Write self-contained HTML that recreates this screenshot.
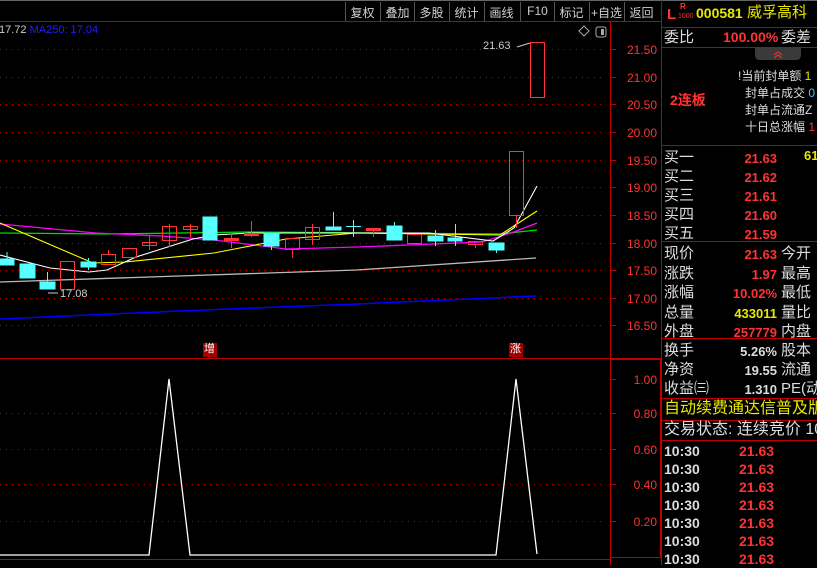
<!DOCTYPE html>
<html><head><meta charset="utf-8"><style>
*{margin:0;padding:0;box-sizing:border-box}
body{width:817px;height:565px;background:#000;overflow:hidden;position:relative;font-family:"Liberation Sans","Noto Sans CJK SC",sans-serif;}
.t{position:absolute;white-space:nowrap;line-height:1}
.btn{position:absolute;top:4px;font-size:12px;color:#d0d0d0;width:35px;text-align:center}
.ax{position:absolute;right:160px;font-size:12px;color:#ff3333;text-align:right;width:46px}
.r{color:#ff3333}.y{color:#e8e800}.w{color:#ddd}
</style></head><body>
<svg width="817" height="565" style="position:absolute;left:0;top:0">
<line x1="0" y1="0.5" x2="817" y2="0.5" stroke="#666"/>
<line x1="0" y1="21.5" x2="661" y2="21.5" stroke="#c00000"/>
<g stroke="#555"><line x1="345.5" y1="2" x2="345.5" y2="21"/><line x1="380.5" y1="2" x2="380.5" y2="21"/><line x1="414.5" y1="2" x2="414.5" y2="21"/><line x1="449.5" y1="2" x2="449.5" y2="21"/><line x1="484.5" y1="2" x2="484.5" y2="21"/><line x1="520.5" y1="2" x2="520.5" y2="21"/><line x1="554.5" y1="2" x2="554.5" y2="21"/><line x1="589.5" y1="2" x2="589.5" y2="21"/><line x1="624.5" y1="2" x2="624.5" y2="21"/></g>
<g stroke="#c00000" stroke-dasharray="1,5">
<line x1="0" y1="49.5" x2="605" y2="49.5"/><line x1="0" y1="77.5" x2="605" y2="77.5"/><line x1="0" y1="104.5" x2="605" y2="104.5"/><line x1="0" y1="132.5" x2="605" y2="132.5"/><line x1="0" y1="160.5" x2="605" y2="160.5"/><line x1="0" y1="187.5" x2="605" y2="187.5"/><line x1="0" y1="215.5" x2="605" y2="215.5"/><line x1="0" y1="243.5" x2="605" y2="243.5"/><line x1="0" y1="270.5" x2="605" y2="270.5"/><line x1="0" y1="298.5" x2="605" y2="298.5"/><line x1="0" y1="325.5" x2="605" y2="325.5"/>
<line x1="0" y1="413.5" x2="605" y2="413.5"/><line x1="0" y1="449.5" x2="605" y2="449.5"/><line x1="0" y1="484.5" x2="605" y2="484.5"/><line x1="0" y1="521.5" x2="605" y2="521.5"/>
</g>
<line x1="610.5" y1="22" x2="610.5" y2="565" stroke="#c00000"/>
<line x1="0" y1="358.5" x2="661" y2="358.5" stroke="#c00000"/>
<line x1="0" y1="559.5" x2="610" y2="559.5" stroke="#c00000"/>
<rect x="610.5" y="359.5" width="50" height="198" fill="none" stroke="#c00000"/>
<line x1="661.5" y1="0" x2="661.5" y2="565" stroke="#c00000"/>
<g stroke="#c00000"><line x1="611" y1="49.5" x2="616" y2="49.5"/><line x1="611" y1="77.5" x2="616" y2="77.5"/><line x1="611" y1="104.5" x2="616" y2="104.5"/><line x1="611" y1="132.5" x2="616" y2="132.5"/><line x1="611" y1="160.5" x2="616" y2="160.5"/><line x1="611" y1="187.5" x2="616" y2="187.5"/><line x1="611" y1="215.5" x2="616" y2="215.5"/><line x1="611" y1="243.5" x2="616" y2="243.5"/><line x1="611" y1="270.5" x2="616" y2="270.5"/><line x1="611" y1="298.5" x2="616" y2="298.5"/><line x1="611" y1="325.5" x2="616" y2="325.5"/><line x1="611" y1="379.5" x2="616" y2="379.5"/><line x1="611" y1="413.5" x2="616" y2="413.5"/><line x1="611" y1="449.5" x2="616" y2="449.5"/><line x1="611" y1="484.5" x2="616" y2="484.5"/><line x1="611" y1="521.5" x2="616" y2="521.5"/></g>
<g stroke="#c00000"><line x1="661" y1="27.5" x2="817" y2="27.5"/><line x1="661" y1="47.5" x2="817" y2="47.5"/><line x1="661" y1="145.5" x2="817" y2="145.5"/><line x1="661" y1="241.5" x2="817" y2="241.5"/><line x1="661" y1="338.5" x2="817" y2="338.5"/><line x1="661" y1="398.5" x2="817" y2="398.5"/><line x1="661" y1="420.5" x2="817" y2="420.5"/><line x1="661" y1="440.5" x2="817" y2="440.5"/></g>
<path d="M755 47h46v8q0 5-5 5h-36q-5 0-5-5z" fill="#3a3a3a"/>
<path d="M774 55l4-3 4 3M774 58l4-3 4 3" stroke="#ff3333" fill="none"/>
<polyline fill="none" stroke="#bbb" stroke-width="1.3" points="0,282 179,276 357,270 536,258"/>
<polyline fill="none" stroke="#0000ff" stroke-width="1.5" points="0,319 179,311 357,304 536,296"/>
<polyline fill="none" stroke="#00dd00" stroke-width="1.3" points="0,233 107,234 250,232 500,234 537,230"/>
<polyline fill="none" stroke="#ff00ff" stroke-width="1.3" points="0,224 96,233 161,236 214,240 286,249 357,247 482,242 511,233 537,223"/>
<polyline fill="none" stroke="#ffff00" stroke-width="1.1" points="0,223 93,263 125,262 214,253 286,239 357,233 500,235 537,211"/>
<polyline fill="none" stroke="#fff" stroke-width="1.1" points="0,255 50,268 89,272 107,270 136,257 193,239 214,235 250,233 357,233 429,233 493,241 514,228 537,186"/>
<g stroke="#ff3333" fill="none">
<rect x="60.5" y="261.5" width="14" height="28"/><rect x="101.5" y="254.5" width="14" height="10"/><line x1="108.5" y1="250" x2="108.5" y2="254"/>
<rect x="122.5" y="248.5" width="14" height="9"/><rect x="142.5" y="242.5" width="14" height="3"/><line x1="149.5" y1="235" x2="149.5" y2="250"/>
<rect x="162.5" y="226.5" width="14" height="14"/><line x1="169.5" y1="224" x2="169.5" y2="247"/>
<rect x="183.5" y="226.5" width="14" height="3"/><line x1="190.5" y1="224" x2="190.5" y2="237"/>
<line x1="231.5" y1="233" x2="231.5" y2="248"/><line x1="251.5" y1="221" x2="251.5" y2="237"/>
<rect x="285.5" y="238.5" width="14" height="11"/><line x1="292.5" y1="249" x2="292.5" y2="258"/>
<rect x="305.5" y="227.5" width="14" height="12"/><line x1="312.5" y1="224" x2="312.5" y2="245"/>
<line x1="373.5" y1="230" x2="373.5" y2="237"/>
<rect x="407.5" y="234.5" width="14" height="9"/><rect x="468.5" y="241.5" width="14" height="3"/><line x1="475.5" y1="244" x2="475.5" y2="248"/>
<rect x="509.5" y="151.5" width="14" height="64"/><line x1="516.5" y1="216" x2="516.5" y2="228"/>
<rect x="530.5" y="42.5" width="14" height="55"/>
</g>
<g fill="#ff3333"><rect x="224" y="238" width="15" height="3"/><rect x="244" y="233" width="15" height="3"/><rect x="366" y="228" width="15" height="3"/></g>
<g fill="#55ffff" stroke="#55ffff">
<rect x="0" y="259" width="14" height="6"/><line x1="7" y1="252" x2="7" y2="259"/>
<rect x="20" y="264" width="15" height="14"/>
<rect x="40" y="282" width="15" height="7"/><line x1="47.5" y1="272" x2="47.5" y2="282"/>
<rect x="81" y="262" width="15" height="5"/><line x1="88.5" y1="258" x2="88.5" y2="270"/>
<rect x="203" y="217" width="14" height="23"/>
<rect x="264" y="233" width="15" height="13"/><line x1="271.5" y1="246" x2="271.5" y2="250"/>
<rect x="326" y="227" width="15" height="3"/><line x1="333.5" y1="212" x2="333.5" y2="227"/>
<line x1="346" y1="226.5" x2="361" y2="226.5"/><line x1="353.5" y1="220" x2="353.5" y2="237"/>
<rect x="387" y="226" width="15" height="14"/><line x1="394.5" y1="222" x2="394.5" y2="226"/>
<rect x="428" y="236" width="15" height="5"/><line x1="435.5" y1="230" x2="435.5" y2="246"/>
<rect x="448" y="238" width="14" height="3"/><line x1="455.5" y1="224" x2="455.5" y2="246"/>
<rect x="489" y="243" width="15" height="7"/><line x1="496.5" y1="250" x2="496.5" y2="253"/>
</g>
<polyline fill="none" stroke="#ccc" points="517,47 530,43"/>
<polyline fill="none" stroke="#ccc" points="48,293 58,293"/>
<polyline fill="none" stroke="#fff" stroke-width="1.3" points="0,555 149,555 169,379 190,555 496,555 516,379 537,554"/>
<rect x="203" y="343" width="14" height="14" fill="#a00000"/><rect x="509" y="343" width="14" height="14" fill="#a00000"/>
<path d="M579 31l5-5 5 5-5 5z" fill="none" stroke="#aaa"/>
<rect x="596" y="27" width="10" height="10" rx="2" fill="none" stroke="#aaa"/><rect x="601" y="29" width="3" height="6" fill="#aaa"/>
</svg>
<div class="btn" style="left:345px">复权</div><div class="btn" style="left:380px">叠加</div><div class="btn" style="left:414px">多股</div><div class="btn" style="left:449px">统计</div><div class="btn" style="left:484px">画线</div><div class="btn" style="left:520px">F10</div><div class="btn" style="left:554px">标记</div><div class="btn" style="left:589px">+自选</div><div class="btn" style="left:624px">返回</div>
<div class="t" style="left:-1px;top:25px;font-size:11px;color:#ccc">17.72 <span style="color:#1f1fff">MA250: 17.04</span></div>
<div class="t" style="left:483px;top:41px;font-size:11px;color:#ccc">21.63</div>
<div class="t" style="left:60px;top:289px;font-size:11px;color:#ccc">17.08</div>
<div class="t" style="left:204px;top:344px;font-size:11px;color:#fff">增</div><div class="t" style="left:510px;top:344px;font-size:11px;color:#fff">涨</div>
<div class="ax" style="top:43px">21.50</div><div class="ax" style="top:71px">21.00</div><div class="ax" style="top:98px">20.50</div><div class="ax" style="top:126px">20.00</div><div class="ax" style="top:154px">19.50</div><div class="ax" style="top:181px">19.00</div><div class="ax" style="top:209px">18.50</div><div class="ax" style="top:237px">18.00</div><div class="ax" style="top:264px">17.50</div><div class="ax" style="top:292px">17.00</div><div class="ax" style="top:319px">16.50</div>
<div class="ax" style="top:373px">1.00</div><div class="ax" style="top:407px">0.80</div><div class="ax" style="top:443px">0.60</div><div class="ax" style="top:478px">0.40</div><div class="ax" style="top:515px">0.20</div>
<div class="t" style="left:667px;top:7px;font-size:15px;color:#ff3333;font-weight:bold">L</div>
<div class="t" style="left:680px;top:3px;font-size:8px;color:#ff3333;font-weight:bold">R</div>
<div class="t" style="left:678px;top:13px;font-size:7px;color:#ff3333">1000</div>
<div class="t y" style="left:696px;top:6px;font-size:14px;font-weight:bold">000581</div>
<div class="t y" style="left:747px;top:5px;font-size:15px">威孚高科</div>
<div class="t w" style="left:664px;top:30px;font-size:15px">委比</div>
<div class="t r" style="left:723px;top:30px;font-size:14px;font-weight:bold">100.00%</div>
<div class="t w" style="left:781px;top:30px;font-size:15px">委差</div>
<div class="t r" style="left:670px;top:93px;font-size:14px;font-weight:bold">2连板</div>
<div class="t w" style="left:738px;top:70px;font-size:12px">!当前封单额 <span class="y">1</span></div>
<div class="t w" style="left:745px;top:87px;font-size:12px">封单占成交 <span style="color:#3cf">0</span></div>
<div class="t w" style="left:745px;top:104px;font-size:12px">封单占流通Z</div>
<div class="t w" style="left:745px;top:121px;font-size:12px">十日总涨幅 <span class="r">1</span></div>
<div class="t w" style="left:664px;top:148px;font-size:15px;line-height:19px">买一<br>买二<br>买三<br>买四<br>买五</div>
<div class="t r" style="left:720px;top:149px;width:57px;text-align:right;font-size:13px;font-weight:bold;line-height:19px">21.63<br>21.62<br>21.61<br>21.60<br>21.59</div>
<div class="t y" style="left:804px;top:149px;font-size:13px;font-weight:bold">61</div>
<div class="t w" style="left:664px;top:244px;font-size:15px;line-height:19.5px">现价<br>涨跌<br>涨幅<br>总量<br>外盘</div>
<div class="t" style="left:700px;top:245px;width:77px;text-align:right;font-size:13px;font-weight:bold;line-height:19.5px"><span class="r">21.63</span><br><span class="r">1.97</span><br><span class="r">10.02%</span><br><span class="y">433011</span><br><span class="r">257779</span></div>
<div class="t w" style="left:781px;top:244px;font-size:15px;line-height:19.5px">今开<br>最高<br>最低<br>量比<br>内盘</div>
<div class="t w" style="left:664px;top:341px;font-size:15px;line-height:19px">换手<br>净资<br>收益㈢</div>
<div class="t w" style="left:700px;top:342px;width:77px;text-align:right;font-size:13px;font-weight:bold;line-height:19px">5.26%<br>19.55<br>1.310</div>
<div class="t w" style="left:781px;top:341px;font-size:15px;line-height:19px">股本<br>流通<br>PE(动</div>
<div class="t y" style="left:664px;top:401px;font-size:16px">自动续费通达信普及版</div>
<div class="t w" style="left:664px;top:422px;font-size:16px">交易状态: 连续竞价 10</div>
<div class="t w" style="left:664px;top:442px;font-size:14px;font-weight:bold;line-height:18px">10:30<br>10:30<br>10:30<br>10:30<br>10:30<br>10:30<br>10:30</div>
<div class="t r" style="left:739px;top:442px;font-size:14px;font-weight:bold;line-height:18px">21.63<br>21.63<br>21.63<br>21.63<br>21.63<br>21.63<br>21.63</div>
</body></html>
